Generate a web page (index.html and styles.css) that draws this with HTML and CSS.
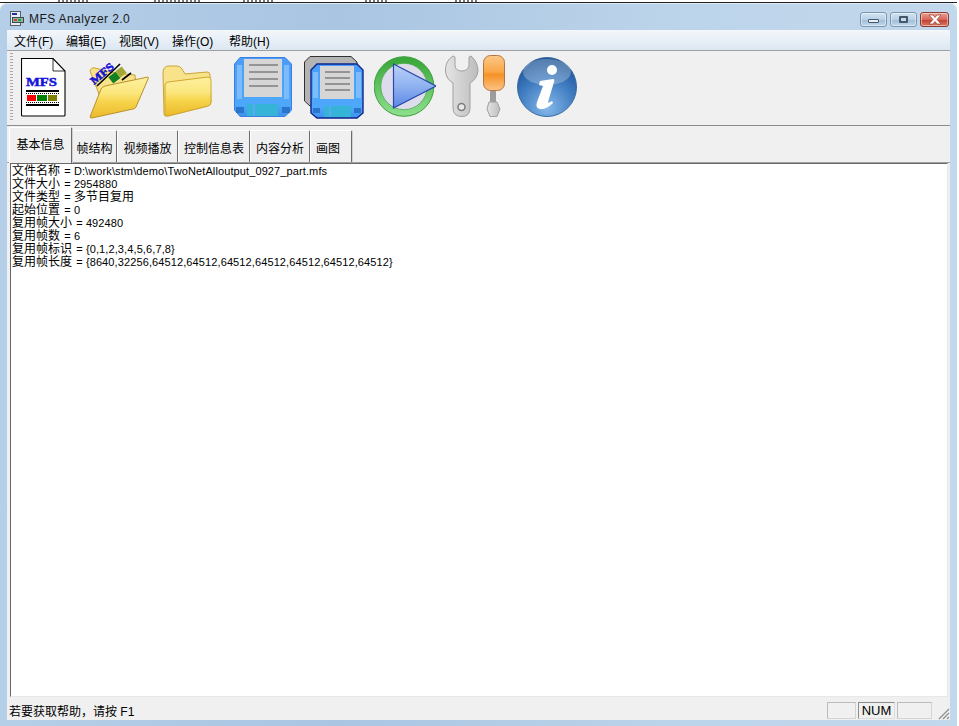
FILE: index.html
```html
<!DOCTYPE html>
<html lang="zh-CN">
<head>
    <meta charset="UTF-8">
    <title>MFS Analyzer 2.0</title>
    <link rel="stylesheet" href="styles.css">
</head>
<body>
    <div class="behind"><i class="b1"></i><i class="b2"></i><i class="b3"></i><i class="b4"></i><i class="b5"></i></div>
    <div class="window">
        <div class="titlebar">
            <svg class="appicon" width="14" height="16" viewBox="0 0 14 16">
                <rect x=".5" y=".5" width="10" height="14" fill="#e8eef0" stroke="#55606a"/>
                <rect x="2" y="2" width="5" height="2" fill="#2030a0"/>
                <rect x="2.500" y="6.500" width="11" height="5" fill="#8fb4a0" stroke="#3a4a50"/>
                <rect x="4" y="8" width="3" height="2" fill="#d04030"/>
                <rect x="8" y="8" width="3" height="2" fill="#20a040"/>
            </svg>
            <span class="title">MFS Analyzer 2.0</span>
            <div class="winbtns">
                <div class="winbtn"><i class="min"></i></div>
                <div class="winbtn"><i class="max"></i></div>
                <div class="winbtn close">
                    <svg width="16" height="11" viewBox="0 0 16 11"><path d="M2 1 L6 1 L8 3.500 L10 1 L14 1 L10 5.500 L14 10 L10 10 L8 7.500 L6 10 L2 10 L6 5.500 Z" fill="#fff" stroke="#8a2a20" stroke-width=".6"/></svg>
                </div>
            </div>
        </div>

        <div class="client">
            <ul class="menu">
                <li>文件(F)</li>
                <li>编辑(E)</li>
                <li>视图(V)</li>
                <li>操作(O)</li>
                <li>帮助(H)</li>
            </ul>

            <div class="toolbar">
                <div class="grip"></div>
                <!-- new file -->
                <svg class="tool t-doc" width="45" height="59" viewBox="0 0 45 59">
                    <path d="M.5 .5 H32 L44 13 V57 Q44 58 43 58 H1.500 Q.5 58 .5 57 Z" fill="#fff" stroke="#000" stroke-width="1.100"/>
                    <path d="M32 .5 V13 H44" fill="none" stroke="#000" stroke-width=".8"/>
                    <text x="5" y="28" class="mfs" textLength="31" lengthAdjust="spacingAndGlyphs">MFS</text>
                    <rect x="5" y="32" width="33" height="2" fill="#000"/>
                    <path d="M5 35.500 H38" stroke="#000" stroke-dasharray="1 1"/>
                    <rect x="6" y="37" width="9" height="6" fill="#ff0000"/>
                    <rect x="16" y="37" width="10" height="6" fill="#008000"/>
                    <rect x="27" y="37" width="9" height="6" fill="#808000"/>
                    <path d="M5 44.500 H38" stroke="#000" stroke-dasharray="1 1"/>
                    <rect x="5" y="46" width="33" height="2" fill="#000"/>
                </svg>
                <!-- open -->
                <svg class="tool t-open" width="61" height="60" viewBox="0 0 61 60">
                    <defs>
                        <linearGradient id="fold" x1="0" y1="0" x2="0" y2="1">
                            <stop offset="0" stop-color="#fdf0a0"/>
                            <stop offset=".4" stop-color="#fbe67c"/>
                            <stop offset=".6" stop-color="#f6d44c"/>
                            <stop offset="1" stop-color="#ecb92a"/>
                        </linearGradient>
                        <linearGradient id="flop" x1="0" y1="0" x2="0" y2="1">
                            <stop offset="0" stop-color="#4a9cf8"/>
                            <stop offset=".8" stop-color="#4ea8fa"/>
                            <stop offset="1" stop-color="#3f90ec"/>
                        </linearGradient>
                        <linearGradient id="playfill" x1="0" y1="0" x2="0" y2="1">
                            <stop offset="0" stop-color="#bcd2f8"/>
                            <stop offset=".5" stop-color="#8fb2f0"/>
                            <stop offset="1" stop-color="#5a86e4"/>
                        </linearGradient>
                        <linearGradient id="ring" x1="0" y1="0" x2="0" y2="1">
                            <stop offset="0" stop-color="#3aa83a"/>
                            <stop offset="1" stop-color="#8ade8a"/>
                        </linearGradient>
                        <radialGradient id="infofill" cx=".5" cy=".85" r=".8">
                            <stop offset="0" stop-color="#86b8ea"/>
                            <stop offset=".6" stop-color="#3f7cc0"/>
                            <stop offset="1" stop-color="#1f5596"/>
                        </radialGradient>
                        <linearGradient id="steel" x1="0" y1="0" x2="1" y2="0">
                            <stop offset="0" stop-color="#e4e4e4"/>
                            <stop offset="1" stop-color="#bdbdbd"/>
                        </linearGradient>
                        <linearGradient id="orange" x1="0" y1="0" x2="0" y2="1">
                            <stop offset="0" stop-color="#fcc888"/>
                            <stop offset=".45" stop-color="#f9a84a"/>
                            <stop offset=".55" stop-color="#f59226"/>
                            <stop offset="1" stop-color="#fcc488"/>
                        </linearGradient>
                    </defs>
                    <path d="M1 12 Q2 8 6 9 L26 14 L46 16 L47 28 L12 40 Z" fill="#f8e28a" stroke="#c9a030"/>
                    <rect x="21" y="15" width="9" height="8" fill="#108020" transform="rotate(-38 25 19)"/>
                    <rect x="28" y="9" width="8" height="8" fill="#a0a838" transform="rotate(-38 32 13)"/>
                    <path d="M8 27 L31 5" stroke="#000" stroke-width="1.600"/>
                    <path d="M33 21 L42 14" stroke="#000" stroke-width="1.600"/>
                    <path d="M1 58 L12 30 Q13 28 16 27 L59 18 Q60 18 59 20 L47 48 Q46 50 44 50 L3 59 Q1 59 1 58 Z" fill="url(#fold)" stroke="#b8922a"/>
                    <text x="5" y="26" class="mfs mfs-tilt" transform="rotate(-40 5 26)" textLength="27" lengthAdjust="spacingAndGlyphs">MFS</text>
                </svg>
                <!-- folder -->
                <svg class="tool t-folder" width="50" height="53" viewBox="0 0 50 53">
                    <path d="M2 49 L1 8 Q1 1 7 1 L15 1 Q18 1 20 4 L23 9 L45 7 Q48 7 48 10 L49 37 Q49 40 46 41 L6 51 Q2 52 2 49 Z" fill="#f8e28a" stroke="#cba436"/>
                    <path d="M3 49 L3 20 Q3 18 6 17 L46 12 Q49 12 49 15 L49 37 Q49 40 46 41 L6 51 Q3 51 3 49 Z" fill="url(#fold)" stroke="#d0a830"/>
                </svg>
                <!-- save -->
                <svg class="tool t-save" width="58" height="60" viewBox="0 0 58 60">
                    <path d="M6 .5 H51 L57.500 7 V53 L51 59.500 H6 L.5 53 V7 Z" fill="url(#flop)" stroke="#3a80e4"/>
                    <rect x="3" y="8" width="5" height="34" fill="#7cbcfa"/>
                    <rect x="50" y="8" width="5" height="34" fill="#7cbcfa"/>
                    <rect x="10" y="2" width="38" height="38" fill="#d6d6d6"/>
                    <path d="M15 8 H44 M15 15 H44 M15 22 H44 M15 29 H44" stroke="#949494" stroke-width="2"/>
                    <rect x="13" y="47" width="31" height="12" fill="#36b4d8"/>
                    <rect x="19" y="47" width="2" height="12" fill="#5ca8f0"/>
                    <rect x="2" y="50" width="8" height="6" fill="#2a74cc"/>
                    <rect x="48" y="50" width="8" height="6" fill="#2a74cc"/>
                </svg>
                <!-- save all -->
                <svg class="tool t-saveall" width="60" height="63" viewBox="0 0 60 63">
                    <path d="M6 .5 H47 L53 6 V50 H6 L.5 45 V6 Z" fill="#b4b4b4" stroke="#303030"/>
                    <path d="M13 8 H53 L59 14 V57 L53 62 H13 L7 57 V14 Z" fill="url(#flop)" stroke="#10248c" stroke-width="1.400"/>
                    <rect x="9" y="16" width="5" height="26" fill="#7cbcfa"/>
                    <rect x="52" y="16" width="5" height="26" fill="#7cbcfa"/>
                    <rect x="16" y="10" width="34" height="33" fill="#d6d6d6"/>
                    <path d="M21 16 H46 M21 22 H46 M21 28 H46 M21 34 H46" stroke="#949494" stroke-width="2"/>
                    <rect x="20" y="50" width="27" height="11" fill="#36b4d8"/>
                    <rect x="25" y="50" width="2" height="11" fill="#5ca8f0"/>
                    <rect x="9" y="52" width="7" height="5" fill="#2a74cc"/>
                    <rect x="50" y="52" width="7" height="5" fill="#2a74cc"/>
                </svg>
                <!-- play -->
                <svg class="tool t-play" width="62" height="64" viewBox="0 0 62 64">
                    <circle cx="30" cy="31.500" r="26.500" fill="#dddcec" stroke="url(#ring)" stroke-width="6.500"/>
                    <circle cx="30" cy="31.500" r="29.800" fill="none" stroke="#3f9f3f"/>
                    <circle cx="30" cy="31.500" r="23.200" fill="none" stroke="#3f9f3f" stroke-width=".7"/>
                    <path d="M19.500 9 L62 31 L19.500 53 Z" fill="url(#playfill)" stroke="#2a48a8" stroke-width="1.200"/>
                </svg>
                <!-- tools -->
                <svg class="tool t-tools" width="60" height="62" viewBox="0 0 60 62">
                    <path d="M8 1 Q0 6 .5 16 Q1 24 8 28 L8 53 Q8 61.500 17 61.500 Q25 61.500 25 53 L25 28 Q32 24 33 16 Q33 7 26 1 Q24 1 24 3 L24 11 Q22 16 17 16 Q11 16 10 11 L10 3 Q10 1 8 1 Z" fill="url(#steel)" stroke="#a0a0a0"/>
                    <circle cx="16.500" cy="52" r="3.500" fill="#e8e8e8" stroke="#7c7c7c" stroke-width="1.500"/>
                    <rect x="38.500" y=".5" width="21" height="35" rx="7" fill="url(#orange)" stroke="#b87440"/>
                    <rect x="45" y="36" width="6" height="11" fill="#9c9c9c"/>
                    <path d="M44 47 H52 L55 54 L52 61.500 H45 L42 54 Z" fill="url(#steel)" stroke="#a0a0a0"/>
                </svg>
                <!-- about -->
                <svg class="tool t-info" width="60" height="60" viewBox="0 0 60 60">
                    <circle cx="30" cy="30" r="29.500" fill="url(#infofill)" stroke="#3a6ca4"/>
                    <ellipse cx="30" cy="15" rx="24" ry="13" fill="#fff" opacity=".25"/>
                    <circle cx="35" cy="13" r="5" fill="#fff"/>
                    <path d="M23 24 L36 22 Q38 22 37 25 L31 45 Q31 47 35 44 L36 46 Q29 53 23 52 Q18 51 20 45 L26 29 L22 28 Z" fill="#fff"/>
                </svg>
            </div>

            <div class="tabs">
                <div class="tab active">基本信息</div>
                <div class="tab w44">帧结构</div>
                <div class="tab w61">视频播放</div>
                <div class="tab w72">控制信息表</div>
                <div class="tab w60">内容分析</div>
                <div class="tab w42">画图</div>
            </div>

            <div class="content">
                <div class="line"><span class="zh">文件名称</span> = D:\work\stm\demo\TwoNetAlloutput_0927_part.mfs</div>
                <div class="line"><span class="zh">文件大小</span> = 2954880</div>
                <div class="line"><span class="zh">文件类型</span> = <span class="zh">多节目复用</span></div>
                <div class="line"><span class="zh">起始位置</span> = 0</div>
                <div class="line"><span class="zh">复用帧大小</span> = 492480</div>
                <div class="line"><span class="zh">复用帧数</span> = 6</div>
                <div class="line"><span class="zh">复用帧标识</span> = {0,1,2,3,4,5,6,7,8}</div>
                <div class="line"><span class="zh">复用帧长度</span> = {8640,32256,64512,64512,64512,64512,64512,64512,64512}</div>
            </div>

            <div class="statusbar">
                <span class="status-text">若要获取帮助，请按 F1</span>
                <span class="pane"></span>
                <span class="pane num">NUM</span>
                <span class="pane last"></span>
                <svg class="sizer" width="13" height="13" viewBox="0 0 13 13">
                    <path d="M12 2 L2 12 M12 6 L6 12 M12 10 L10 12" stroke="#8c8c8c" stroke-width="1.200"/>
                </svg>
            </div>
        </div>
    </div>
</body>
</html>
```

FILE: styles.css
```css
* {
    box-sizing: border-box;
}
html, body {
    margin: 0;
    height: 100%;
    overflow: hidden;
    background: #fff;
}
body {
    font-family: "Liberation Sans", "Noto Sans CJK SC", sans-serif;
    font-size: 12px;
    color: #000;
    padding-right: 2px;
}

/* bits of the window behind */
.behind {
    height: 3px;
    overflow: hidden;
    display: flex;
    border-bottom: 1px solid #222;
}
.behind i {
    display: block;
    height: 2px;
    background: repeating-linear-gradient(90deg, #777 0 2px, transparent 2px 4px);
}
.b1 { width: 30px; margin-left: 58px; }
.b2 { width: 46px; margin-left: 66px; }
.b3 { width: 30px; margin-left: 43px; }
.b4 { width: 24px; margin-left: 92px; }
.b5 { width: 24px; margin-left: 66px; }

.window {
    height: 723px;
    display: flex;
    flex-direction: column;
    padding: 0 7px 6px 7px;
    border-radius: 7px 7px 0 0;
    background: linear-gradient(90deg, #b6cfe8 0, #a9c5e2 35%, #bcd4ea 70%, #c2d8ec 100%);
    box-shadow: inset 0 1px 0 #dfe9f3;
}

.titlebar {
    height: 27px;
    flex: none;
    display: flex;
    align-items: center;
    padding: 5px 0 0 3px;
}
.appicon {
    margin-right: 5px;
}
.title {
    font-family: "Liberation Sans", sans-serif;
    font-size: 12px;
    color: #1a1a1a;
    letter-spacing: .4px;
}
.winbtns {
    margin-left: auto;
    display: flex;
    gap: 3px;
    margin-right: 1px;
}
.winbtn {
    width: 27px;
    height: 15px;
    border: 1px solid #7d96b0;
    border-radius: 3px;
    background: linear-gradient(#d4e4f2 0, #b8cfe4 50%, #9fbcd8 51%, #c0d8ec 100%);
    box-shadow: inset 0 0 0 1px rgba(255,255,255,.45);
    display: flex;
    align-items: center;
    justify-content: center;
}
.winbtn.close {
    width: 29px;
    border-color: #8a3a30;
    background: linear-gradient(#e8a090 0, #d8685a 50%, #c23c2e 51%, #d87a60 100%);
}
.min {
    display: block;
    width: 11px;
    height: 4px;
    margin-top: 4px;
    background: #e8eef4;
    border: 1px solid #44586c;
    border-radius: 1px;
}
.max {
    display: block;
    width: 9px;
    height: 7px;
    background: #c8d8e6;
    border: 2px solid #44586c;
    border-radius: 1px;
}

.client {
    flex: 1;
    min-height: 0;
    display: flex;
    flex-direction: column;
    background: #f0f0f0;
}

.menu {
    flex: none;
    display: flex;
    height: 20px;
    margin: 0;
    padding: 0 0 0 7px;
    list-style: none;
    align-items: center;
    background: linear-gradient(#f4f7fb, #dce7f3);
    font-size: 12px;
}
.menu li {
    width: 53px;
    white-space: nowrap;
}
.menu li:first-child {
    width: 52px;
}
.menu li:nth-child(4) {
    width: 57px;
}

.toolbar {
    flex: none;
    height: 76px;
    position: relative;
    border-top: 1px solid #a0a0a0;
    border-bottom: 1px solid #8c8c8c;
    background: #f0f0f0;
    display: flex;
    align-items: flex-start;
}
.grip {
    width: 3px;
    height: 68px;
    margin: 2px 0 0 3px;
    background: repeating-linear-gradient(#a8a8a8 0 1px, transparent 1px 3px);
}
.tool {
    flex: none;
}
.t-doc { margin: 7px 0 0 8px; }
.t-open { margin: 8px 0 0 23px; }
.t-folder { margin: 14px 0 0 12px; }
.t-save { margin: 6px 0 0 22px; }
.t-saveall { margin: 5px 0 0 12px; }
.t-play { margin: 4px 0 0 10px; }
.t-tools { margin: 4px 0 0 9px; }
.t-info { margin: 6px 0 0 12px; }
.mfs {
    font-family: "Liberation Serif", serif;
    font-weight: bold;
    font-size: 13px;
    fill: #1414d8;
    stroke: #1414d8;
    stroke-width: .5;
}
.mfs-tilt {
    font-size: 11px;
}

.tabs {
    flex: none;
    height: 37px;
    display: flex;
    align-items: flex-end;
    padding-left: 2px;
    border-bottom: 1px solid #a0a0a0;
    background: #f0f0f0;
}
.tab {
    height: 32px;
    line-height: 36px;
    text-align: center;
    white-space: nowrap;
    border-left: 1px solid #fff;
    border-right: 1px solid #6c6c6c;
    border-top: 1px solid #fff;
    border-radius: 2px 2px 0 0;
    box-shadow: 1px 0 0 #d0d0d0;
}
.tab.active {
    width: 63px;
    height: 36px;
    line-height: 35px;
    margin-bottom: -1px;
    position: relative;
    background: #f0f0f0;
}
.w44 { width: 45px; }
.w61 { width: 61px; }
.w72 { width: 72px; }
.w60 { width: 60px; }
.w42 { width: 42px; padding-right: 6px; }

.content {
    flex: 1;
    min-height: 0;
    margin: 0 2px 0 3px;
    padding: 1px 0 0 1px;
    background: #fff;
    border-left: 1px solid #696969;
    border-top: 1px solid #696969;
    border-right: 1px solid #e8e8e8;
    border-bottom: 1px solid #e8e8e8;
    font-size: 11px;
    letter-spacing: .11px;
}
.line {
    height: 13px;
    line-height: 13px;
    white-space: nowrap;
}
.zh {
    font-size: 12px;
    letter-spacing: 0;
    margin-right: 1px;
}

.statusbar {
    flex: none;
    height: 23px;
    display: flex;
    align-items: center;
    position: relative;
    padding: 3px 18px 0 2px;
    font-size: 12px;
}
.status-text {
    flex: 1;
}
.pane {
    height: 17px;
    border: 1px solid #d4d4d4;
    border-top-color: #bcbcbc;
    border-left-color: #bcbcbc;
    width: 29px;
    margin-left: 2px;
}
.pane.num {
    width: 37px;
    line-height: 16px;
    text-align: center;
    font-size: 13px;
    border-color: #8c8c8c #dcdcdc #dcdcdc #8c8c8c;
}
.pane.last {
    width: 35px;
}
.sizer {
    position: absolute;
    right: 0;
    bottom: 0;
}
```
